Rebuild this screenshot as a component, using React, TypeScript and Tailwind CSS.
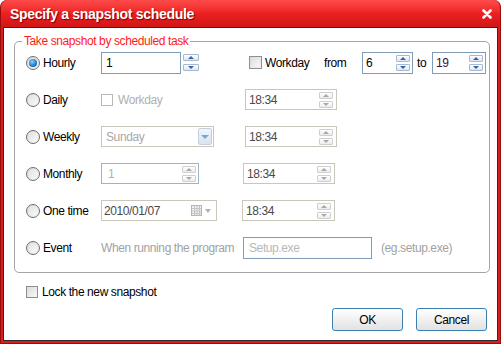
import React from "react";

const font = "font-['Liberation_Sans',Arial,sans-serif]";

const Tri = ({ up, disabled }: { up: boolean; disabled?: boolean }) => (
  <span
    className={`block w-0 h-0 border-l-[3px] border-r-[3px] border-l-transparent border-r-transparent ${
      up
        ? disabled
          ? "border-b-[3px] border-b-[#a8a8a8]"
          : "border-b-[3px] border-b-[#2f63ad]"
        : disabled
        ? "border-t-[3px] border-t-[#a8a8a8]"
        : "border-t-[3px] border-t-[#2f63ad]"
    }`}
  />
);

const SpinBtn = ({ up, disabled, w }: { up: boolean; disabled?: boolean; w: string }) => (
  <span
    className={`flex items-center justify-center h-[7px] ${w} rounded-[1px] border ${
      disabled
        ? "border-[#cfcfcf] bg-gradient-to-b from-white to-[#ececec]"
        : "border-[#a9b8cc] bg-gradient-to-b from-white to-[#dfe6ef]"
    }`}
  >
    <Tri up={up} disabled={disabled} />
  </span>
);

const Spin = ({ disabled, w = "w-[14px]", gap = "gap-[2px]" }: { disabled?: boolean; w?: string; gap?: string }) => (
  <span className={`flex flex-col ${gap}`}>
    <SpinBtn up disabled={disabled} w={w} />
    <SpinBtn up={false} disabled={disabled} w={w} />
  </span>
);

const Radio = ({ checked }: { checked?: boolean }) => (
  <span className="flex items-center justify-center w-[14px] h-[14px] rounded-full border border-[#6f6f6f] bg-gradient-to-br from-[#d8d8d8] to-[#f6f6f6]">
    {checked ? (
      <span className="w-[8px] h-[8px] rounded-full bg-[radial-gradient(circle_at_40%_35%,#8fd0ff,#1877c9_60%,#0d4f96)]" />
    ) : (
      <span className="w-[10px] h-[10px] rounded-full bg-gradient-to-br from-[#e2e2e2] to-[#f9f9f9]" />
    )}
  </span>
);

const Check = ({ disabled, size = "w-[13px] h-[13px]" }: { disabled?: boolean; size?: string }) => (
  <span
    className={`flex items-center justify-center ${size} border ${
      disabled ? "border-[#b8b8b8] bg-white" : "border-[#8e8f8f] bg-gradient-to-br from-[#dcdcdc] to-[#f4f4f4]"
    }`}
  >
    {!disabled && <span className="w-[7px] h-[7px] bg-gradient-to-br from-[#e0e0e0] to-[#f7f7f7]" />}
  </span>
);

const RadioLabel = ({ label, checked }: { label: string; checked?: boolean }) => (
  <div className="flex items-center gap-[3px] w-[75px] shrink-0">
    <Radio checked={checked} />
    <span className="text-black">{label}</span>
  </div>
);

const TimeBox = ({ w = "w-[92px]" }: { w?: string }) => (
  <div className={`flex items-center justify-between ${w} h-[21px] border border-[#c9c7ba] bg-white pl-[3px] pr-[3px]`}>
    <span className="text-[#4a4a4a]">18:34</span>
    <Spin disabled />
  </div>
);

export default function App() {
  return (
    <div className={`w-[501px] h-[344px] ${font} text-[12px] leading-[14px] tracking-[-0.4px] bg-[#d81e1e] rounded-t-[7px] flex flex-col overflow-hidden border-l border-r border-b border-[#9a0b0b]`}>
      <div className="h-[27px] shrink-0 flex items-center justify-between pl-[9px] pr-[8px] rounded-t-[7px] bg-gradient-to-b from-[#ff4b4b] via-[#eb2020] to-[#d21616]">
        <span className="text-white font-bold text-[14px] tracking-[-0.3px] [text-shadow:1px_1px_1px_#7a0000]">
          Specify a snapshot schedule
        </span>
        <svg width="10" height="10" viewBox="0 0 10 10" className="mt-[1px]">
          <path d="M1.5 1.5 L8.5 8.5 M8.5 1.5 L1.5 8.5" stroke="white" strokeWidth="2.6" strokeLinecap="round" />
        </svg>
      </div>
      <div className="flex-1 mx-[2px] mb-[2px] bg-white border border-[#2a2a2a] flex flex-col">
        <div className="relative mt-[13px] ml-[10px] w-[476px] h-[232px] shrink-0 border border-[#a5a5a5] rounded-[5px] pl-[11px] pt-[2px]">
          <span className="absolute -top-[8px] left-[7px] bg-white px-[2px] text-[#ff1a1a]">
            Take snapshot by scheduled task
          </span>

          <div className="flex items-center h-[37px]">
            <RadioLabel label="Hourly" checked />
            <div className="w-[80px] h-[22px] border border-[#7f9db9] flex items-center pl-[4px] text-black">1</div>
            <div className="ml-[2px]">
              <Spin w="w-[16px]" gap="gap-[3px]" />
            </div>
            <div className="flex items-center gap-[3px] ml-[50px] w-[75px]">
              <Check />
              <span>Workday</span>
            </div>
            <span className="w-[38px]">from</span>
            <div className="w-[51px] h-[22px] border border-[#7f9db9] flex items-center justify-between pl-[3px] pr-[2px]">
              <span>6</span>
              <Spin />
            </div>
            <span className="w-[19px] pl-[4px]">to</span>
            <div className="w-[54px] h-[22px] border border-[#7f9db9] flex items-center justify-between pl-[3px] pr-[2px]">
              <span className="text-[#3a1040]">19</span>
              <Spin />
            </div>
          </div>

          <div className="flex items-center h-[37px]">
            <RadioLabel label="Daily" />
            <div className="w-[144px] flex items-center gap-[5px]">
              <Check disabled size="w-[12px] h-[12px]" />
              <span className="text-[#b0b0b0]">Workday</span>
            </div>
            <TimeBox />
          </div>

          <div className="flex items-center h-[37px]">
            <RadioLabel label="Weekly" />
            <div className="w-[144px]">
              <div className="w-[113px] h-[21px] border border-[#c9c7ba] flex items-center justify-between pl-[4px] pr-[1px]">
                <span className="text-[#a8a8a8]">Sunday</span>
                <span className="flex items-center justify-center w-[14px] h-[17px] rounded-[2px] border border-[#c3cfdf] bg-gradient-to-b from-[#f2f5fa] to-[#d9e3ef]">
                  <span className="block w-0 h-0 border-l-[4px] border-r-[4px] border-t-[4px] border-l-transparent border-r-transparent border-t-[#7aa6d6]" />
                </span>
              </div>
            </div>
            <TimeBox />
          </div>

          <div className="flex items-center h-[37px]">
            <RadioLabel label="Monthly" />
            <div className="w-[142px]">
              <div className="w-[98px] h-[21px] border border-[#9fb2c9] flex items-center justify-between pl-[6px] pr-[2px]">
                <span className="text-[#b0b0b0]">1</span>
                <Spin disabled />
              </div>
            </div>
            <TimeBox />
          </div>

          <div className="flex items-center h-[37px]">
            <RadioLabel label="One time" />
            <div className="w-[141px]">
              <div className="w-[116px] h-[21px] border border-[#c9c7ba] flex items-center justify-between pl-[2px] pr-[5px]">
                <span className="text-[#4a4a4a]">2010/01/07</span>
                <span className="flex items-center gap-[3px]">
                  <svg width="11" height="11" viewBox="0 0 11 11">
                    <rect x="0.5" y="0.5" width="10" height="10" fill="#f2f2f2" stroke="#b4b4b4" />
                    <path d="M0.5 3.5 H10.5 M0.5 6 H10.5 M0.5 8.5 H10.5 M3.5 0.5 V10.5 M6 0.5 V10.5 M8.5 0.5 V10.5" stroke="#c4c4c4" strokeWidth="1" />
                  </svg>
                  <span className="block w-0 h-0 border-l-[3.5px] border-r-[3.5px] border-t-[4px] border-l-transparent border-r-transparent border-t-[#b0b0b0]" />
                </span>
              </div>
            </div>
            <TimeBox w="w-[93px]" />
          </div>

          <div className="flex items-center h-[37px]">
            <RadioLabel label="Event" />
            <span className="w-[142px] shrink-0 whitespace-nowrap text-[#a2a2a2]">When running the program</span>
            <div className="w-[129px] h-[22px] border border-[#7f9db9] flex items-center pl-[5px] text-[#b8b8b8]">
              Setup.exe
            </div>
            <span className="ml-[9px] text-[#a2a2a2]">(eg.setup.exe)</span>
          </div>
        </div>

        <div className="flex items-center gap-[4px] mt-[11px] pl-[22px] h-[16px]">
          <Check size="w-[12px] h-[12px]" />
          <span>Lock the new snapshot</span>
        </div>

        <div className="flex justify-end gap-[13px] pr-[10px] mt-[8px]">
          <button className="w-[71px] h-[23px] rounded-[3px] border border-[#3c7fb1] bg-gradient-to-b from-white via-[#f0f0f0] to-[#e2e2e2] text-black">
            OK
          </button>
          <button className="w-[71px] h-[23px] rounded-[3px] border border-[#3c7fb1] bg-gradient-to-b from-white via-[#f0f0f0] to-[#e2e2e2] text-black">
            Cancel
          </button>
        </div>
      </div>
    </div>
  );
}
